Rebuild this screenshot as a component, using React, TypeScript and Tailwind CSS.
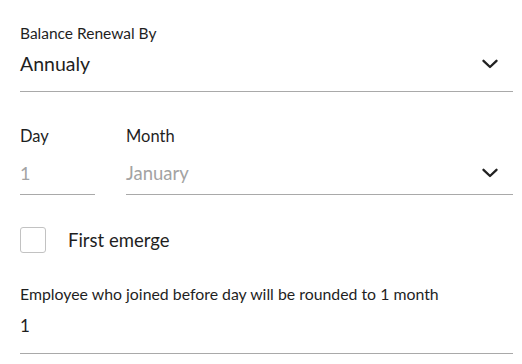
import React from "react";

function Chevron() {
  return (
    <svg width="16" height="10" viewBox="0 0 16 10" fill="none" className="shrink-0">
      <path d="M1.5 1.8 L8 8 L14.5 1.8" stroke="#212121" strokeWidth="2.3" strokeLinecap="round" strokeLinejoin="round" />
    </svg>
  );
}

export default function App() {
  return (
    <div className="w-[522px] h-[364px] bg-white pl-5 pr-[9px] pt-[23px] text-[#1f1f1f]" style={{ fontFamily: "Lato, 'Open Sans', sans-serif" }}>
      <div className="text-[15.5px] leading-[20px]">Balance Renewal By</div>
      <div className="flex items-center justify-between pt-[9px] pb-[15px] border-b border-[#a9a9a9] pr-[15px]">
        <span className="text-[19.5px] leading-[24px]">Annualy</span>
        <Chevron />
      </div>

      <div className="flex mt-[33px]">
        <div className="w-[75px]">
          <div className="text-[16.5px] leading-[22px]">Day</div>
          <div className="mt-[14px] pb-[9px] border-b border-[#a9a9a9] text-[18px] leading-[24px] text-[#a3a3a3]">1</div>
        </div>
        <div className="flex-1 ml-[31px]">
          <div className="text-[16.5px] leading-[22px]">Month</div>
          <div className="mt-[14px] pb-[9px] flex items-center justify-between border-b border-[#a9a9a9] pr-[15px]">
            <span className="text-[18.5px] leading-[24px] text-[#a3a3a3]">January</span>
            <Chevron />
          </div>
        </div>
      </div>

      <div className="flex items-center mt-[32px] h-[26px]">
        <div className="w-[26px] h-[26px] border border-[#c2c2c2] rounded-[3px] box-border" />
        <span className="ml-[22px] text-[18.5px] leading-[26px]">First emerge</span>
      </div>

      <div className="mt-[31px] text-[15.85px] leading-[20px]">Employee who joined before day will be rounded to 1 month</div>
      <div className="mt-[10px] pb-[15px] border-b border-[#a9a9a9] text-[17px] leading-[24px]">1</div>
    </div>
  );
}
